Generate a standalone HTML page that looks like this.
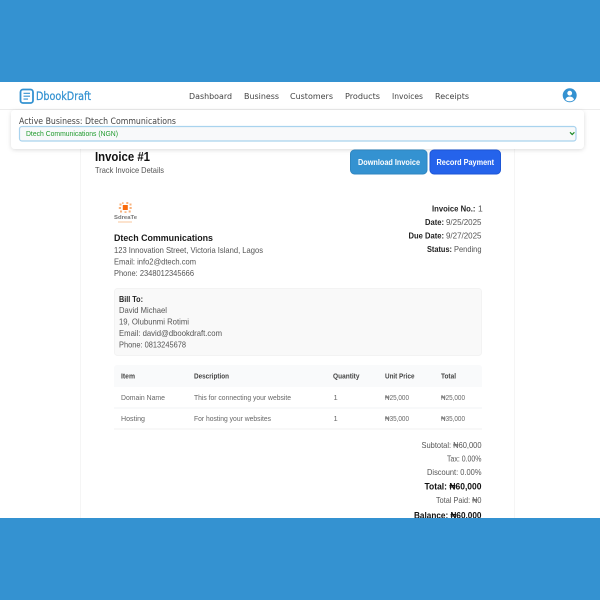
<!DOCTYPE html>
<html lang="en">
<head>
<meta charset="utf-8">
<title>Invoice #1</title>
<style>
html,body{margin:0;padding:0;width:600px;height:600px;overflow:hidden;background:#fff}
svg{display:block;filter:blur(.3px)}
text{font-family:"Liberation Sans","DejaVu Sans",sans-serif;font-size:8.5px;fill:#555}
.nav{font-family:"DejaVu Sans",sans-serif;font-size:8.2px;fill:#444}
.b{font-weight:700;fill:#222}
.h{font-weight:700;font-size:7.5px;fill:#444}
.s{font-size:7.5px;fill:#666}
</style>
</head>
<body>
<svg width="600" height="600" viewBox="0 0 600 600" xmlns="http://www.w3.org/2000/svg">
<defs>
<filter id="sh" x="-5%" y="-30%" width="110%" height="170%"><feDropShadow dx="0" dy="1" stdDeviation="2" flood-color="#000" flood-opacity=".14"/></filter>
</defs>
<rect width="600" height="600" fill="#fff"/>

<!-- card -->
<rect x="80.5" y="140" width="434" height="400" fill="#fff" stroke="#f5f5f5"/>

<!-- nav -->
<rect x="0" y="82" width="600" height="28" fill="#fff"/>
<rect x="0" y="109" width="600" height="1" fill="#ececec"/>
<rect x="20.5" y="89.5" width="12.5" height="13.5" rx="2.5" fill="none" stroke="#3492d1" stroke-width="1.8"/>
<path d="M23.5 93.3H30M23.5 96.2H30M23.5 99.1H28" stroke="#3492d1" stroke-width="1.1" fill="none"/>
<text x="36" y="100" textLength="55" lengthAdjust="spacingAndGlyphs" style="font-family:'DejaVu Sans',sans-serif;font-size:11.5px;fill:#3492d1;stroke:#3492d1;stroke-width:.25">DbookDraft</text>
<text class="nav" x="189" y="99" textLength="43" lengthAdjust="spacingAndGlyphs">Dashboard</text>
<text class="nav" x="244" y="99" textLength="35" lengthAdjust="spacingAndGlyphs">Business</text>
<text class="nav" x="290" y="99" textLength="43" lengthAdjust="spacingAndGlyphs">Customers</text>
<text class="nav" x="345" y="99" textLength="35" lengthAdjust="spacingAndGlyphs">Products</text>
<text class="nav" x="392" y="99" textLength="31" lengthAdjust="spacingAndGlyphs">Invoices</text>
<text class="nav" x="435" y="99" textLength="34" lengthAdjust="spacingAndGlyphs">Receipts</text>
<circle cx="569.7" cy="95.3" r="7" fill="#3492d1"/>
<circle cx="569.7" cy="93.2" r="2.4" fill="#fff"/>
<path d="M565.4 99.6c.6-2.2 2.3-3 4.3-3s3.7.8 4.3 3c-1.1 1.1-2.6 1.7-4.3 1.7s-3.2-.6-4.3-1.7z" fill="#fff"/>

<!-- active business panel -->
<rect x="11" y="110" width="573" height="39" rx="4" fill="#fff" filter="url(#sh)"/>
<text x="19" y="124" textLength="157" lengthAdjust="spacingAndGlyphs" style="font-family:'DejaVu Sans',sans-serif;font-size:9px;fill:#444">Active Business: Dtech Communications</text>
<rect x="19.5" y="126.5" width="556.5" height="14.5" rx="2.5" fill="#f8f9fa" stroke="#a9d3ee" stroke-width="1.2"/>
<text x="26" y="136" textLength="92" lengthAdjust="spacingAndGlyphs" style="font-size:7.2px;fill:#1f9a2c">Dtech Communications (NGN)</text>
<path d="M570 132.3l2.2 2.2 2.2-2.2" fill="none" stroke="#1a8a26" stroke-width="1.2"/>

<!-- heading -->
<text x="95" y="161" textLength="55" lengthAdjust="spacingAndGlyphs" style="font-size:12.5px;font-weight:700;fill:#111">Invoice #1</text>
<text x="95" y="173" textLength="69" lengthAdjust="spacingAndGlyphs" style="font-size:8.5px;fill:#555">Track Invoice Details</text>

<!-- buttons -->
<rect x="350.5" y="150" width="76.5" height="24" rx="4" fill="#3492d1" stroke="#2f86c0"/>
<text x="358" y="165" textLength="62" lengthAdjust="spacingAndGlyphs" style="font-size:7.8px;font-weight:700;fill:#fff">Download Invoice</text>
<rect x="430" y="150" width="70.5" height="24" rx="4" fill="#2563eb" stroke="#1d56d6"/>
<text x="436.5" y="165" textLength="57.5" lengthAdjust="spacingAndGlyphs" style="font-size:7.8px;font-weight:700;fill:#fff">Record Payment</text>

<!-- business logo -->
<g fill="#f8b27c">
<rect x="122.8" y="205" width="5" height="5" fill="#fa6a0a"/>
<rect x="119.5" y="203.5" width="2" height="2"/><rect x="122" y="202.3" width="1.6" height="1.6"/><rect x="126.3" y="202" width="2" height="2"/><rect x="129.5" y="203.5" width="2" height="2"/><rect x="129.5" y="207" width="2.2" height="2"/><rect x="118.8" y="207" width="2.2" height="2"/><rect x="120" y="210.5" width="2" height="2"/><rect x="124.5" y="211.3" width="2" height="1.6"/><rect x="128.7" y="210.5" width="2" height="2"/>
</g>
<text x="114" y="219" textLength="23" lengthAdjust="spacingAndGlyphs" style="font-size:5.5px;font-weight:700;fill:#777">SdreaTe</text>
<rect x="118" y="221.5" width="14" height="1" fill="#f9c79c"/>

<!-- company -->
<text class="b" x="114" y="241" textLength="99" lengthAdjust="spacingAndGlyphs" style="font-size:9.5px;fill:#1a1a1a">Dtech Communications</text>
<text x="114" y="253" textLength="149" lengthAdjust="spacingAndGlyphs">123 Innovation Street, Victoria Island, Lagos</text>
<text x="114" y="264.5" textLength="82" lengthAdjust="spacingAndGlyphs">Email: info2@dtech.com</text>
<text x="114" y="276" textLength="80" lengthAdjust="spacingAndGlyphs">Phone: 2348012345666</text>

<!-- meta -->
<text class="b" x="432" y="211.5" textLength="43.5" lengthAdjust="spacingAndGlyphs">Invoice No.:</text>
<text x="478" y="211.5">1</text>
<text class="b" x="425" y="225" textLength="19" lengthAdjust="spacingAndGlyphs">Date:</text>
<text x="446" y="225" textLength="35.5" lengthAdjust="spacingAndGlyphs">9/25/2025</text>
<text class="b" x="408.5" y="238.5" textLength="35.5" lengthAdjust="spacingAndGlyphs">Due Date:</text>
<text x="446" y="238.5" textLength="35.5" lengthAdjust="spacingAndGlyphs">9/27/2025</text>
<text class="b" x="427" y="252" textLength="25" lengthAdjust="spacingAndGlyphs">Status:</text>
<text x="454" y="252" textLength="27.5" lengthAdjust="spacingAndGlyphs">Pending</text>

<!-- bill to -->
<rect x="114.5" y="288.5" width="367" height="67" rx="3" fill="#f9f9f9" stroke="#f3f3f3"/>
<text class="b" x="119" y="302" textLength="24" lengthAdjust="spacingAndGlyphs" style="font-size:8px">Bill To:</text>
<text x="119" y="313" textLength="48" lengthAdjust="spacingAndGlyphs">David Michael</text>
<text x="119" y="324.5" textLength="70" lengthAdjust="spacingAndGlyphs">19, Olubunmi Rotimi</text>
<text x="119" y="336" textLength="103" lengthAdjust="spacingAndGlyphs">Email: david@dbookdraft.com</text>
<text x="119" y="347.5" textLength="67" lengthAdjust="spacingAndGlyphs">Phone: 0813245678</text>

<!-- table -->
<path d="M114 387V368a3 3 0 0 1 3-3H479a3 3 0 0 1 3 3V387z" fill="#f9fafb"/>
<rect x="114" y="407.5" width="368" height="1" fill="#f2f3f4"/>
<rect x="114" y="428.5" width="368" height="1" fill="#f0f1f2"/>
<text class="h" x="121" y="378.5" textLength="14" lengthAdjust="spacingAndGlyphs">Item</text>
<text class="h" x="194" y="378.5" textLength="35" lengthAdjust="spacingAndGlyphs">Description</text>
<text class="h" x="333" y="378.5" textLength="26.5" lengthAdjust="spacingAndGlyphs">Quantity</text>
<text class="h" x="385" y="378.5" textLength="29.5" lengthAdjust="spacingAndGlyphs">Unit Price</text>
<text class="h" x="441" y="378.5" textLength="15" lengthAdjust="spacingAndGlyphs">Total</text>

<text class="s" x="121" y="400" textLength="44" lengthAdjust="spacingAndGlyphs">Domain Name</text>
<text class="s" x="194" y="400" textLength="97" lengthAdjust="spacingAndGlyphs">This for connecting your website</text>
<text class="s" x="333.5" y="400">1</text>
<text class="s" x="385" y="400" textLength="24" lengthAdjust="spacingAndGlyphs">₦25,000</text>
<text class="s" x="441" y="400" textLength="24" lengthAdjust="spacingAndGlyphs">₦25,000</text>

<text class="s" x="121" y="421" textLength="24" lengthAdjust="spacingAndGlyphs">Hosting</text>
<text class="s" x="194" y="421" textLength="77" lengthAdjust="spacingAndGlyphs">For hosting your websites</text>
<text class="s" x="333.5" y="421">1</text>
<text class="s" x="385" y="421" textLength="24" lengthAdjust="spacingAndGlyphs">₦35,000</text>
<text class="s" x="441" y="421" textLength="24" lengthAdjust="spacingAndGlyphs">₦35,000</text>

<!-- totals -->
<text x="421.5" y="448" textLength="60" lengthAdjust="spacingAndGlyphs">Subtotal: ₦60,000</text>
<text x="447" y="461.5" textLength="34.5" lengthAdjust="spacingAndGlyphs">Tax: 0.00%</text>
<text x="427" y="475" textLength="54.5" lengthAdjust="spacingAndGlyphs">Discount: 0.00%</text>
<text class="b" x="424.5" y="489.5" textLength="57" lengthAdjust="spacingAndGlyphs" style="font-size:9.5px;fill:#111">Total: ₦60,000</text>
<text x="436" y="503" textLength="45.5" lengthAdjust="spacingAndGlyphs">Total Paid: ₦0</text>
<text class="b" x="414" y="518.5" textLength="67.5" lengthAdjust="spacingAndGlyphs" style="font-size:9.5px;fill:#111">Balance: ₦60,000</text>

<!-- blue bands -->
<rect x="0" y="0" width="600" height="82" fill="#3492d1"/>
<rect x="0" y="518" width="600" height="82" fill="#3492d1"/>
</svg>
</body>
</html>
